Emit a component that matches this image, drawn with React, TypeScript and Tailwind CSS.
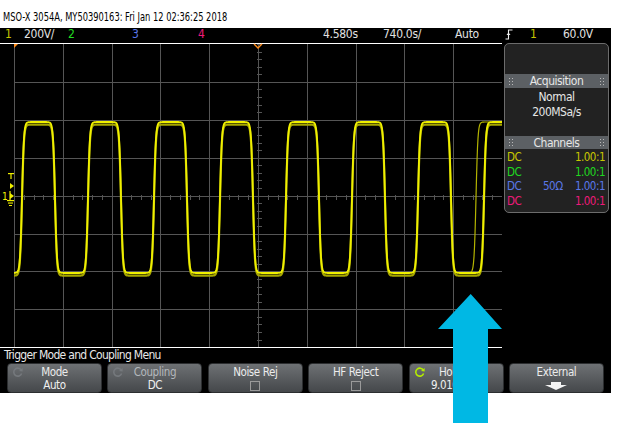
import React from "react";

const FONT = '"Liberation Sans Narrow","DejaVu Sans Condensed","Liberation Sans",sans-serif';

function wavePath(offset: number) {
  const high = 79,
    low = 230;
  const rises = [22, 88, 154, 220, 286, 352, 418, 484];
  const falls = [55, 121, 187, 253, 319, 385, 451];
  const sig = (t: number) => 0.5 * (1 + Math.tanh(t / 1.9));
  let d = "";
  for (let x = 14; x <= 502; x += 0.5) {
    let s = 0;
    for (const r of rises) s += sig(x - r);
    for (const f of falls) s -= sig(x - f);
    const y = low + (high - low) * s + offset;
    d += (x === 14 ? "M" : "L") + x.toFixed(1) + " " + y.toFixed(2);
  }
  return d;
}

function jitterPath() {
  const high = 79,
    low = 230;
  const sig = (t: number) => 0.5 * (1 + Math.tanh(t / 1.9));
  let d = "";
  for (let x = 466; x <= 492; x += 0.5) {
    const y = low + (high - low) * sig(x - 476);
    d += (x === 466 ? "M" : "L") + x.toFixed(1) + " " + y.toFixed(2);
  }
  return d;
}

function Graticule() {
  const vx = Array.from({ length: 11 }, (_, i) => Math.round(14 + i * 48.8) + 0.5);
  const hy = Array.from({ length: 9 }, (_, j) => Math.round(1 + j * 37.9) + 0.5);
  const cx = vx[5];
  const cy = hy[4];
  const hticks = Array.from({ length: 51 }, (_, i) => 14 + i * 9.76);
  const vticks = Array.from({ length: 41 }, (_, i) => 1 + i * 7.58);
  return (
    <svg width={502} height={305} className="block shrink-0">
      <rect x={0} y={0} width={502} height={305} fill="#000" />
      <g stroke="#555555" strokeWidth={1} shapeRendering="crispEdges">
        {vx.map((x) => (
          <line key={"v" + x} x1={x} y1={1} x2={x} y2={304} />
        ))}
        {hy.slice(1, 8).map((y) => (
          <line key={"h" + y} x1={14} y1={y} x2={502} y2={y} />
        ))}
        {hticks.map((x, i) => (
          <line key={"ht" + i} x1={Math.round(x) + 0.5} y1={cy - 2} x2={Math.round(x) + 0.5} y2={cy + 3} />
        ))}
        {vticks.map((y, i) => (
          <line key={"vt" + i} x1={cx - 2} y1={Math.round(y) + 0.5} x2={cx + 3} y2={Math.round(y) + 0.5} />
        ))}
      </g>
      <g stroke="#ffffff" strokeWidth={1} shapeRendering="crispEdges">
        <line x1={0} y1={0.5} x2={502} y2={0.5} />
        <line x1={0} y1={304.5} x2={502} y2={304.5} />
      </g>
      {/* trace */}
      <path d={wavePath(2.6)} fill="none" stroke="#a6a600" strokeWidth={2.2} />
      <path d={jitterPath()} fill="none" stroke="#b4b400" strokeWidth={1.2} />
      <path d={wavePath(0)} fill="none" stroke="#f0f000" strokeWidth={1.8} />
      {/* orange markers */}
      <polygon points="14,1 18,1 14,5" fill="#ff8c1a" />
      <polyline points="254,1 258,5 262,1" fill="none" stroke="#ff8c1a" strokeWidth={1.4} />
      {/* left markers */}
      <g fill="#f0f000" stroke="none">
        <rect x={8} y={130} width={6} height={1.2} />
        <rect x={10.4} y={130} width={1.2} height={6} />
        <polygon points="10,140 14,143 10,146" />
        <text x={2} y={157} fontSize={10} fontFamily={FONT} fill="#f0f000">1</text>
        <rect x={9.4} y={148} width={1.2} height={9} />
        <polygon points="10,150 14,153 10,156" />
        <rect x={7} y={157} width={7} height={1.2} />
        <rect x={8} y={159.5} width={5} height={1.1} />
        <rect x={9} y={162} width={3} height={1} />
      </g>
    </svg>
  );
}

function Grip() {
  return (
    <svg width={4} height={7} className="block">
      {[0, 3].map((x) =>
        [0, 3, 6].map((y) => <rect key={x + "-" + y} x={x} y={y} width={1} height={1} fill="#b8b8b8" />)
      )}
    </svg>
  );
}

function PanelBar({ title, h }: { title: string; h: string }) {
  return (
    <div className={`${h} bg-[#5c6064] flex items-center justify-between px-[4px]`}>
      <Grip />
      <span className="text-[12px] leading-[12px] tracking-[-0.5px] text-[#e6e6e6]">{title}</span>
      <Grip />
    </div>
  );
}

function Cycle({ color }: { color: string }) {
  return (
    <svg width={10} height={10} viewBox="0 0 10 10" className="block">
      <path d="M8.3 3.2 A4 4 0 1 0 8.6 6.4" fill="none" stroke={color} strokeWidth={1.6} />
      <polygon points="9.6,1 9.6,4.6 6,4" fill={color} />
    </svg>
  );
}

function Btn({
  label,
  value,
  icon,
  labelColor = "text-[#ececec]",
  valueClass = "",
}: {
  label: string;
  value: React.ReactNode;
  icon?: React.ReactNode;
  labelColor?: string;
  valueClass?: string;
}) {
  return (
    <div className="relative w-[95px] h-[30px] rounded-[4px] border border-[#2c2e30] bg-gradient-to-b from-[#6e7174] via-[#595c5f] to-[#45484b] flex flex-col items-center tracking-[-0.4px]">
      {icon && <div className="absolute left-[5px] top-[3px]">{icon}</div>}
      <div className={`pt-[2px] text-[11.5px] leading-[12px] ${labelColor}`}>{label}</div>
      <div className={`mt-[1px] h-[12px] flex items-center text-[11.5px] leading-[12px] text-[#f0f0f0] ${valueClass}`}>
        {value}
      </div>
    </div>
  );
}

function Check() {
  return <div className="w-[10px] h-[10px] border border-[#9a9a9a] mt-[2px]" />;
}

function TrigEdge() {
  return (
    <svg width={8} height={11} viewBox="0 0 8 11" className="block">
      <polyline points="0.5,10 3.5,10 3.5,1 7.5,1" fill="none" stroke="#f0f0f0" strokeWidth={1.1} />
      <polygon points="1.5,6 5.5,6 3.5,3.5" fill="#f0f0f0" />
    </svg>
  );
}

export default function App() {
  return (
    <div className="relative w-[628px] h-[423px] bg-white overflow-hidden" style={{ fontFamily: FONT }}>
      <div className="h-[28px] pl-[3px] pt-[10px] text-[13px] leading-[14px] text-black whitespace-nowrap">
        <span className="inline-block origin-left scale-x-[0.71]">MSO-X 3054A, MY50390163: Fri Jan 12 02:36:25 2018</span>
      </div>
      <div className="w-[611px] h-[365px] bg-black flex flex-col">
        {/* status row */}
        <div className="h-[15px] flex items-start pl-[5px] text-[12px] leading-[12px] tracking-[-0.3px] text-[#e2e2e2] whitespace-nowrap">
          <span className="w-[19px] text-[#c4c400]">1</span>
          <span className="w-[44px]">200V/</span>
          <span className="w-[64px] text-[#22dd22]">2</span>
          <span className="w-[66px] text-[#5a78e8]">3</span>
          <span className="w-[125px] text-[#ee1a7a]">4</span>
          <span className="w-[60px]">4.580s</span>
          <span className="w-[72px]">740.0s/</span>
          <span className="w-[50px]">Auto</span>
          <span className="w-[25px] pt-[1px]">
            <TrigEdge />
          </span>
          <span className="w-[33px] text-[#c4c400]">1</span>
          <span>60.0V</span>
        </div>
        {/* main */}
        <div className="h-[305px] flex items-start">
          <Graticule />
          <div className="ml-[2px] w-[105px] h-[170px] rounded-[5px] border border-[#6c6c6c] bg-[#222222] flex flex-col overflow-hidden">
            <div className="h-[30px]" />
            <PanelBar title="Acquisition" h="h-[14px]" />
            <div className="h-[48px] pt-[2px] flex flex-col items-center text-[12px] leading-[15px] tracking-[-0.5px] text-[#e6e6e6]">
              <span>Normal</span>
              <span>200MSa/s</span>
            </div>
            <PanelBar title="Channels" h="h-[13px]" />
            <div className="pt-[1px] pl-[2px] pr-[3px] flex flex-col text-[11.5px] leading-[14.7px] tracking-[-0.5px]">
              <div className="flex justify-between text-[#c8c800]">
                <span>DC</span>
                <span>1.00:1</span>
              </div>
              <div className="flex justify-between text-[#20d820]">
                <span>DC</span>
                <span>1.00:1</span>
              </div>
              <div className="flex text-[#5a78e8]">
                <span className="w-[36px]">DC</span>
                <span className="flex-1">50Ω</span>
                <span>1.00:1</span>
              </div>
              <div className="flex justify-between text-[#ee1a7a]">
                <span>DC</span>
                <span>1.00:1</span>
              </div>
            </div>
          </div>
        </div>
        {/* menu title */}
        <div className="h-[15px] pl-[4px] text-[12px] leading-[14px] tracking-[-0.7px] text-[#e8e8e8] whitespace-nowrap">
          Trigger Mode and Coupling Menu
        </div>
        <div className="h-[30px] flex gap-[5.4px] pl-[7px]">
          <Btn label="Mode" value="Auto" icon={<Cycle color="#75797d" />} />
          <Btn label="Coupling" value="DC" icon={<Cycle color="#75797d" />} labelColor="text-[#b4b8bc]" />
          <Btn label="Noise Rej" value={<Check />} />
          <Btn label="HF Reject" value={<Check />} />
          <Btn label="Holdoff" value="9.010ms" icon={<Cycle color="#b4ec00" />} valueClass="mr-[8px]" />
          <Btn
            label="External"
            value={
              <svg width={22} height={8} viewBox="0 0 22 8" className="block mt-[2px]">
                <polygon points="6,0 16,0 16,3 22,3 11,8 0,3 6,3" fill="#f4f4f4" />
              </svg>
            }
          />
        </div>
      </div>
      {/* blue arrow overlay */}
      <svg width={64} height={129} viewBox="0 0 64 129" className="absolute left-[438px] top-[294px]">
        <polygon points="32.7,0 64,35 50,35 50,129 15,129 15,35 0,35" fill="#00b8e4" />
      </svg>
    </div>
  );
}
